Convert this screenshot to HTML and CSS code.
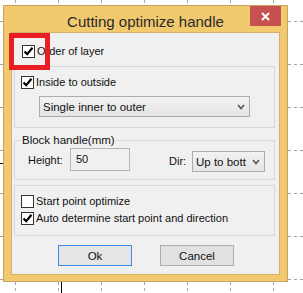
FILE: index.html
```html
<!DOCTYPE html>
<html>
<head>
    <title>Cutting optimize handle</title>
    <link rel="stylesheet" href="styles.css">
</head>
<body>
    <!-- drawing canvas behind the dialog -->
    <svg class="canvas" width="303" height="293" viewBox="0 0 303 293">
        <g class="grid">
            <line x1="15.5" y1="0" x2="15.5" y2="293"/>
            <line x1="58.5" y1="0" x2="58.5" y2="293"/>
            <line x1="101.5" y1="0" x2="101.5" y2="293"/>
            <line x1="144.5" y1="0" x2="144.5" y2="293"/>
            <line x1="187.5" y1="0" x2="187.5" y2="293"/>
            <line x1="230.5" y1="0" x2="230.5" y2="293"/>
            <line x1="273.5" y1="0" x2="273.5" y2="293"/>
            <line x1="0" y1="21.5" x2="303" y2="21.5"/>
            <line x1="0" y1="64.5" x2="303" y2="64.5"/>
            <line x1="0" y1="107.5" x2="303" y2="107.5"/>
            <line x1="0" y1="150.5" x2="303" y2="150.5"/>
            <line x1="0" y1="193.5" x2="303" y2="193.5"/>
            <line x1="0" y1="236.5" x2="303" y2="236.5"/>
            <line x1="0" y1="279.5" x2="303" y2="279.5"/>
        </g>
        <path class="axis" d="M0 163.5 H61.5 V293"/>
    </svg>

    <div class="dialog">
        <div class="titlebar">
            <span class="title">Cutting optimize handle</span>
            <span class="close">
                <svg width="9" height="9" viewBox="0 0 9 9"><path d="M1 1 L8 8 M8 1 L1 8"/></svg>
            </span>
        </div>

        <div class="client">
            <label class="check order">
                <span class="box"><svg width="11" height="11" viewBox="0 0 11 11"><path d="M1.5 5.5 L4.2 8.2 L9.5 1.8"/></svg></span>
                Order of layer
            </label>

            <div class="group inside">
                <label class="check">
                    <span class="box"><svg width="11" height="11" viewBox="0 0 11 11"><path d="M1.5 5.5 L4.2 8.2 L9.5 1.8"/></svg></span>
                    Inside to outside
                </label>
                <div class="select wide">
                    <span>Single inner to outer</span>
                    <svg class="chev" width="8" height="6" viewBox="0 0 8 6"><path d="M1 1 L4 4.5 L7 1"/></svg>
                </div>
            </div>

            <fieldset class="group block">
                <legend>Block handle(mm)</legend>
                <div class="field-row">
                    <span class="lbl">Height:</span>
                    <span class="input">50</span>
                    <span class="lbl dir">Dir:</span>
                    <div class="select narrow">
                        <span>Up to bott</span>
                        <svg class="chev" width="8" height="6" viewBox="0 0 8 6"><path d="M1 1 L4 4.5 L7 1"/></svg>
                    </div>
                </div>
            </fieldset>

            <div class="group start">
                <label class="check">
                    <span class="box empty"></span>
                    Start point optimize
                </label>
                <label class="check">
                    <span class="box"><svg width="11" height="11" viewBox="0 0 11 11"><path d="M1.5 5.5 L4.2 8.2 L9.5 1.8"/></svg></span>
                    Auto determine start point and direction
                </label>
            </div>

            <div class="buttons">
                <button class="btn focused">Ok</button>
                <button class="btn">Cancel</button>
            </div>
        </div>
    </div>

    <!-- red annotation over the first option -->
    <div class="marker"></div>
</body>
</html>
```

FILE: styles.css
```css
* {
    box-sizing: border-box;
}
html, body {
    margin: 0;
    background: #fff;
    font-family: "Liberation Sans", Arial, sans-serif;
    font-size: 11px;
    color: #111;
}
body {
    position: relative;
    width: 303px;
    height: 293px;
    overflow: hidden;
    padding: 5px 0 0 3px;
}
.canvas {
    position: absolute;
    left: 0;
    top: 0;
}
.canvas .grid line {
    stroke: #a4a4a4;
    stroke-width: 1;
    stroke-dasharray: 3 3;
}
.canvas .axis {
    fill: none;
    stroke: #000;
    stroke-width: 1;
}

/* window frame */
.dialog {
    position: relative;
    width: 285px;
    height: 277px;
    background: #f1c96e;
    border: 1px solid #c9a55c;
    padding: 0 7px 7px 7px;
}
.titlebar {
    height: 26px;
    display: grid;
    grid-template-columns: 1fr auto 1fr;
    margin: 0 -7px;
}
.title {
    grid-column: 2;
    font-size: 15px;
    color: #2a2a2a;
    line-height: 17px;
    padding-top: 7px;
    white-space: nowrap;
}
.close {
    grid-column: 3;
    justify-self: end;
    width: 31px;
    height: 20px;
    margin-right: 6px;
    background: #c75050;
    display: flex;
    align-items: center;
    justify-content: center;
}
.close path {
    stroke: #fff;
    stroke-width: 2;
    fill: none;
}

.client {
    height: 243px;
    background: #f0f0f0;
    border: 1px solid #d4b168;
    padding: 0 0 0 2px;
}

/* checkboxes */
.check {
    display: flex;
    align-items: center;
    height: 13px;
    line-height: 13px;
    white-space: nowrap;
}
.box {
    width: 13px;
    height: 13px;
    border: 1px solid #333;
    background: #fff;
    margin-right: 2px;
    display: flex;
    align-items: center;
    justify-content: center;
}
.box path {
    fill: none;
    stroke: #000;
    stroke-width: 2.2;
}
.check.order {
    margin: 12px 0 0 8px;
}

/* group boxes */
.group {
    width: 261px;
    border: 1px solid #d7d7d7;
    margin: 0;
}
.inside {
    height: 62px;
    margin-top: 8px;
    padding: 9px 0 0 6px;
}
.select {
    display: flex;
    align-items: center;
    justify-content: space-between;
    height: 21px;
    border: 1px solid #acacac;
    background: linear-gradient(#f2f2f2, #e5e5e5);
    padding: 0 4px 0 3px;
    font-size: 11.5px;
}
.chev path {
    fill: none;
    stroke: #555;
    stroke-width: 1.6;
}
.select.wide {
    width: 211px;
    margin: 7px 0 0 18px;
}
.block {
    height: 47px;
    margin-top: 5px;
    padding: 0 0 0 6px;
    min-width: 0;
}
.block legend {
    padding: 0 1px;
    line-height: 14px;
    font-size: 11.5px;
}
.field-row {
    display: flex;
    align-items: flex-start;
    margin-top: 1px;
}
.lbl {
    line-height: 14px;
}
.field-row .lbl:first-child {
    margin: 5px 0 0 7px;
    width: 42px;
}
.input {
    width: 60px;
    height: 23px;
    border: 1px solid #b4b4b4;
    background: #f0f0f0;
    padding: 4px 0 0 5px;
}
.lbl.dir {
    margin: 6px 0 0 39px;
    width: 23px;
}
.select.narrow {
    width: 73px;
    margin-top: 3px;
}
.start {
    height: 51px;
    margin-top: 5px;
    padding: 9px 0 0 6px;
    display: flex;
    flex-direction: column;
    gap: 4px;
}

/* dialog buttons */
.buttons {
    display: flex;
    gap: 28px;
    margin: 9px 0 0 44px;
}
.btn {
    width: 74px;
    height: 21px;
    border: 1px solid #adadad;
    background: #e1e1e1;
    font-family: inherit;
    font-size: 11.5px;
    color: #111;
    padding: 0;
}
.btn.focused {
    border-color: #3b8ee6;
    background: #e5e5e5;
}

.marker {
    position: absolute;
    left: 9px;
    top: 33px;
    width: 41px;
    height: 37px;
    border: 5px solid #ea1c24;
}
```
